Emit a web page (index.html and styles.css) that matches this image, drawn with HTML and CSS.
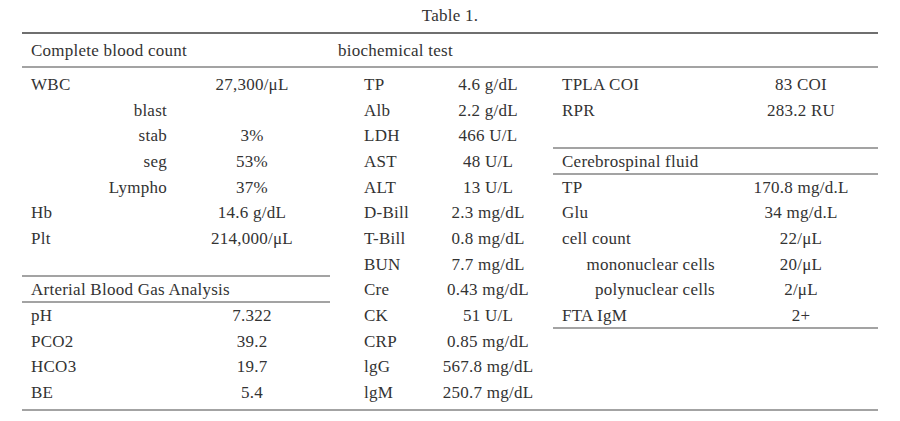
FILE: index.html
```html
<!DOCTYPE html>
<html lang="en">
<head>
<meta charset="utf-8">
<title>Table 1.</title>
<link rel="stylesheet" href="styles.css">
</head>
<body>
<div class="title">Table 1.</div>
<div class="table">
  <div class="head">
    <div class="head-cell head-left">Complete blood count</div>
    <div class="head-cell head-mid">biochemical test</div>
    <div class="head-cell"></div>
  </div>
  <div class="body">
    <div class="col col-left">
      <div class="row"><span class="lab">WBC</span><span class="val">27,300/μL</span></div>
      <div class="row"><span class="lab sub">blast</span><span class="val"></span></div>
      <div class="row"><span class="lab sub">stab</span><span class="val">3%</span></div>
      <div class="row"><span class="lab sub">seg</span><span class="val">53%</span></div>
      <div class="row"><span class="lab sub">Lympho</span><span class="val">37%</span></div>
      <div class="row"><span class="lab">Hb</span><span class="val">14.6 g/dL</span></div>
      <div class="row"><span class="lab">Plt</span><span class="val">214,000/μL</span></div>
      <div class="row rule"></div>
      <div class="row rule"><span class="lab section">Arterial Blood Gas Analysis</span></div>
      <div class="row"><span class="lab">pH</span><span class="val">7.322</span></div>
      <div class="row"><span class="lab">PCO2</span><span class="val">39.2</span></div>
      <div class="row"><span class="lab">HCO3</span><span class="val">19.7</span></div>
      <div class="row"><span class="lab">BE</span><span class="val">5.4</span></div>
    </div>
    <div class="col col-mid">
      <div class="row"><span class="lab">TP</span><span class="val">4.6 g/dL</span></div>
      <div class="row"><span class="lab">Alb</span><span class="val">2.2 g/dL</span></div>
      <div class="row"><span class="lab">LDH</span><span class="val">466 U/L</span></div>
      <div class="row"><span class="lab">AST</span><span class="val">48 U/L</span></div>
      <div class="row"><span class="lab">ALT</span><span class="val">13 U/L</span></div>
      <div class="row"><span class="lab">D-Bill</span><span class="val">2.3 mg/dL</span></div>
      <div class="row"><span class="lab">T-Bill</span><span class="val">0.8 mg/dL</span></div>
      <div class="row"><span class="lab">BUN</span><span class="val">7.7 mg/dL</span></div>
      <div class="row"><span class="lab">Cre</span><span class="val">0.43 mg/dL</span></div>
      <div class="row"><span class="lab">CK</span><span class="val">51 U/L</span></div>
      <div class="row"><span class="lab">CRP</span><span class="val">0.85 mg/dL</span></div>
      <div class="row"><span class="lab">lgG</span><span class="val">567.8 mg/dL</span></div>
      <div class="row"><span class="lab">lgM</span><span class="val">250.7 mg/dL</span></div>
    </div>
    <div class="col col-right">
      <div class="row"><span class="lab">TPLA COI</span><span class="val">83 COI</span></div>
      <div class="row"><span class="lab">RPR</span><span class="val">283.2 RU</span></div>
      <div class="row rule"></div>
      <div class="row rule"><span class="lab section">Cerebrospinal fluid</span></div>
      <div class="row"><span class="lab">TP</span><span class="val">170.8 mg/d.L</span></div>
      <div class="row"><span class="lab">Glu</span><span class="val">34 mg/d.L</span></div>
      <div class="row"><span class="lab">cell count</span><span class="val">22/μL</span></div>
      <div class="row"><span class="lab sub">mononuclear cells</span><span class="val">20/μL</span></div>
      <div class="row"><span class="lab sub">polynuclear cells</span><span class="val">2/μL</span></div>
      <div class="row rule"><span class="lab">FTA IgM</span><span class="val">2+</span></div>
    </div>
  </div>
</div>
</body>
</html>
```
FILE: styles.css
```css
html, body {
  margin: 0;
  padding: 0;
  background: #ffffff;
}

body {
  font-family: "Liberation Serif", "Times New Roman", serif;
  font-size: 17px;
  letter-spacing: 0.25px;
  color: #333333;
  width: 900px;
  height: 421px;
  overflow: hidden;
}

.title {
  padding-top: 4px;
  line-height: 24px;
  height: 24px;
  text-align: center;
}

.table {
  margin: 4px 0 0 22px;
  width: 856px;
  border-top: 2px solid #6f6f6f;
  border-bottom: 2px solid #a3a3a3;
}

.head {
  display: grid;
  grid-template-columns: 308px 223px 325px;
  border-bottom: 2px solid #a3a3a3;
}

.head-cell {
  padding-top: 5px;
  padding-bottom: 3px;
  line-height: 24px;
  white-space: nowrap;
}

.head-left {
  padding-left: 9px;
}

.head-mid {
  padding-left: 8px;
}

.body {
  display: grid;
  grid-template-columns: 308px 223px 325px;
  padding-top: 4px;
  padding-bottom: 3px;
}

.col {
  display: flex;
  flex-direction: column;
}

.row {
  box-sizing: border-box;
  height: 25.67px;
  line-height: 25.67px;
  display: grid;
  white-space: nowrap;
}

.row.rule {
  border-bottom: 2px solid #a3a3a3;
}

.col-left .row {
  grid-template-columns: 160px 140px;
}

.col-mid .row {
  grid-template-columns: 98px 120px;
}

.col-right .row {
  grid-template-columns: 178px 140px;
}

.lab {
  text-align: left;
}

.val {
  text-align: center;
}

.col-left .lab {
  padding-left: 9px;
}

.col-left .lab.sub {
  text-align: right;
  padding-right: 15px;
  padding-left: 0;
}

.col-mid .lab {
  padding-left: 34px;
}

.col-right .lab {
  padding-left: 9px;
}

.col-right .lab.sub {
  text-align: right;
  padding-right: 16px;
  padding-left: 0;
}

.lab.section {
  grid-column: 1 / -1;
}
```
